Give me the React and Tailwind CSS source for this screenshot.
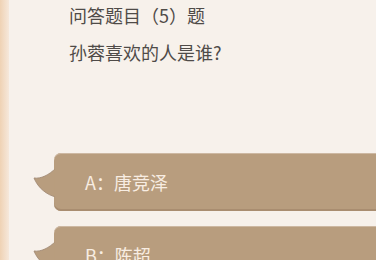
import React from "react";

function Tail() {
  return (
    <svg
      className="absolute left-[-21px] top-[14px]"
      width="23"
      height="32"
      viewBox="0 0 23 32"
    >
      <path
        d="M1,11 C8,12 16,8 23,1 L23,30 C14,28 5,21 1,11 Z"
        fill="#b89d7e"
        stroke="#a38b76"
        strokeWidth="0.9"
      />
      <rect x="21.6" y="0" width="1.4" height="32" fill="#b89d7e" />
    </svg>
  );
}

function Option({ label }) {
  return (
    <div className="relative ml-[45px] h-[58px] rounded-l-[7px] bg-[#b89d7e] shadow-[inset_0_1px_0_#cdb8a2,inset_0_-2px_0_#a98d70] flex items-center pl-[31px]">
      <Tail />
      <span className="text-[18px] text-[#f8ede2] leading-none">{label}</span>
    </div>
  );
}

export default function App() {
  return (
    <div
      className="w-[376px] h-[260px] overflow-hidden flex bg-[#f7f1eb]"
      style={{ fontFamily: '"Noto Sans CJK SC", "Noto Sans", sans-serif' }}
    >
      <div className="w-[9px] h-full bg-gradient-to-r from-[#efd2b4] to-[#f6e8db]" />
      <div className="flex-1 flex flex-col">
        <div className="pl-[60px] text-[18px] text-[#4f4b48]">
          <div className="leading-[30px]">问答题目（5）题</div>
          <div className="leading-[30px] mt-[7px]">孙蓉喜欢的人是谁?</div>
        </div>
        <div className="mt-[86px] flex flex-col gap-[15px]">
          <Option label="A：唐竞泽" />
          <Option label="B：陈超" />
        </div>
      </div>
    </div>
  );
}
